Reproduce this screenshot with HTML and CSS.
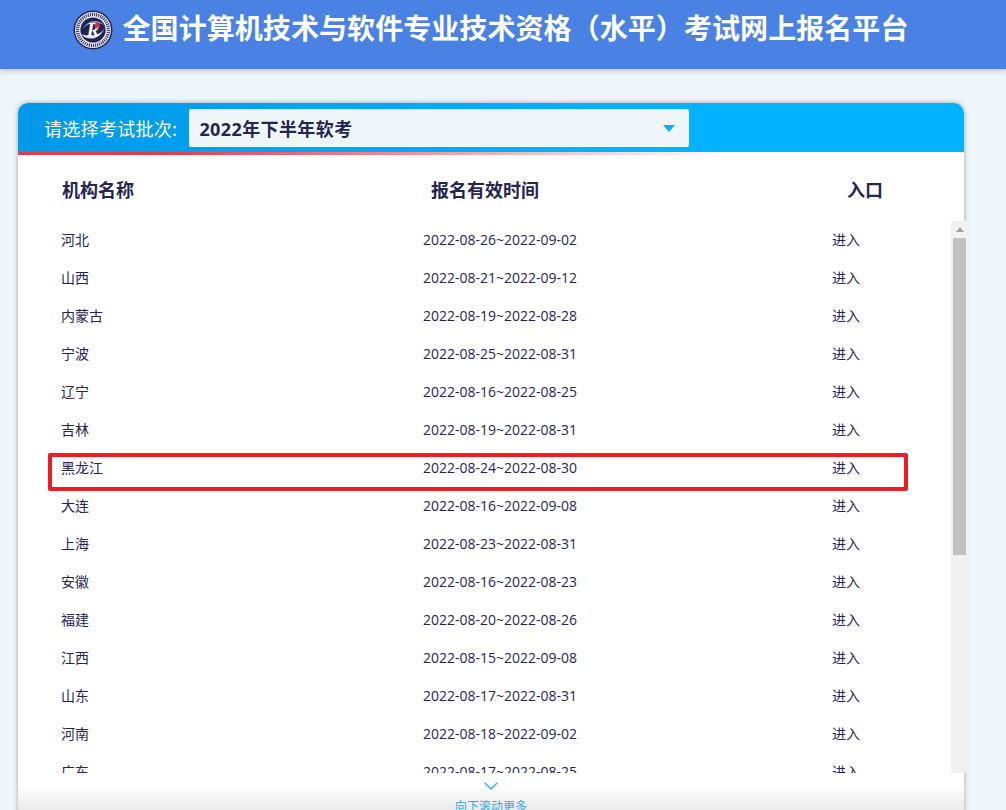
FILE: index.html
```html
<!DOCTYPE html>
<html lang="zh-CN">
<head>
  <meta charset="UTF-8" />
  <title>全国计算机技术与软件专业技术资格（水平）考试网上报名平台</title>
  <link rel="stylesheet" href="styles.css">
</head>
<body>

  <header class="topbar">
    <svg class="logo" viewBox="0 0 40 40" aria-hidden="true">
      <circle cx="20" cy="20" r="19.5" fill="#23234f"/>
      <circle cx="20" cy="20" r="18" fill="#f2f3f7"/>
      <circle cx="20" cy="20" r="15.5" fill="none" stroke="#3c3f70" stroke-width="3.4" stroke-dasharray="1.2 0.9"/>
      <circle cx="20" cy="20" r="12.6" fill="#1f2153"/>
      <path d="M8 24 C14 31 27 31 32 17 C29 25 17 28 8 24Z" fill="#e8ebf5"/>
      <path d="M31 15 C26 9 14 9 9 20 C13 13 24 11 31 15Z" fill="#8e95bd"/>
      <text x="20" y="26" class="logo-r">R</text>
      <path d="M21 15l3-3 1 2 3 1-3 2-1 3-1-3z" fill="#d8323f"/>
    </svg>
    <h1>全国计算机技术与软件专业技术资格（水平）考试网上报名平台</h1>
  </header>

  <main class="card">
    <div class="card-head">
      <span class="batch-label">请选择考试批次:</span>
      <div class="batch-select">
        <span>2022年下半年软考</span>
        <i class="caret"></i>
      </div>
    </div>
    <div class="red-line"></div>

    <div class="table-head">
      <span class="col-name">机构名称</span>
      <span class="col-time">报名有效时间</span>
      <span class="col-link">入口</span>
    </div>

    <div class="list-wrap">
      <div class="list">
        <div class="row"><span class="col-name">河北</span><span class="col-time">2022-08-26~2022-09-02</span><span class="col-link">进入</span></div>
        <div class="row"><span class="col-name">山西</span><span class="col-time">2022-08-21~2022-09-12</span><span class="col-link">进入</span></div>
        <div class="row"><span class="col-name">内蒙古</span><span class="col-time">2022-08-19~2022-08-28</span><span class="col-link">进入</span></div>
        <div class="row"><span class="col-name">宁波</span><span class="col-time">2022-08-25~2022-08-31</span><span class="col-link">进入</span></div>
        <div class="row"><span class="col-name">辽宁</span><span class="col-time">2022-08-16~2022-08-25</span><span class="col-link">进入</span></div>
        <div class="row"><span class="col-name">吉林</span><span class="col-time">2022-08-19~2022-08-31</span><span class="col-link">进入</span></div>
        <div class="row"><span class="col-name">黑龙江</span><span class="col-time">2022-08-24~2022-08-30</span><span class="col-link">进入</span></div>
        <div class="row"><span class="col-name">大连</span><span class="col-time">2022-08-16~2022-09-08</span><span class="col-link">进入</span></div>
        <div class="row"><span class="col-name">上海</span><span class="col-time">2022-08-23~2022-08-31</span><span class="col-link">进入</span></div>
        <div class="row"><span class="col-name">安徽</span><span class="col-time">2022-08-16~2022-08-23</span><span class="col-link">进入</span></div>
        <div class="row"><span class="col-name">福建</span><span class="col-time">2022-08-20~2022-08-26</span><span class="col-link">进入</span></div>
        <div class="row"><span class="col-name">江西</span><span class="col-time">2022-08-15~2022-09-08</span><span class="col-link">进入</span></div>
        <div class="row"><span class="col-name">山东</span><span class="col-time">2022-08-17~2022-08-31</span><span class="col-link">进入</span></div>
        <div class="row"><span class="col-name">河南</span><span class="col-time">2022-08-18~2022-09-02</span><span class="col-link">进入</span></div>
        <div class="row"><span class="col-name">广东</span><span class="col-time">2022-08-17~2022-08-25</span><span class="col-link">进入</span></div>
      </div>
      <div class="scrollbar">
        <i class="scroll-up"></i>
        <div class="scroll-thumb"></div>
      </div>
      <div class="highlight"></div>
    </div>

    <div class="more">
      <svg class="more-icon" viewBox="0 0 14 8" aria-hidden="true">
        <path d="M0.7 0.7 L7 7 L13.3 0.7" fill="none" stroke="#2fb4f5" stroke-width="1.5"/>
      </svg>
      <span>向下滚动更多</span>
    </div>
  </main>

</body>
</html>
```

FILE: styles.css
```css
html, body {
  height: 810px;
  overflow: hidden;
}

body {
  margin: 0;
  background: #eff6f9;
  color: #25254f;
  font-family: "Open Sans", "Noto Sans CJK SC", sans-serif;
}

.topbar {
  display: flex;
  align-items: flex-start;
  justify-content: center;
  gap: 10px;
  height: 69px;
  padding-right: 25px;
  box-sizing: border-box;
  background: #4a82e4;
  box-shadow: 0 2px 6px rgba(0, 0, 0, 0.2);
}

.logo {
  width: 40px;
  height: 40px;
  margin-top: 10px;
}

.logo-r {
  font-family: "Liberation Serif", serif;
  font-size: 19px;
  font-style: italic;
  font-weight: bold;
  fill: #fff;
  text-anchor: middle;
}

.topbar h1 {
  margin: 5px 0 0;
  font-family: "Noto Sans CJK SC", sans-serif;
  font-size: 28px;
  line-height: 44px;
  font-weight: bold;
  letter-spacing: 0.07px;
  color: #fff;
  white-space: nowrap;
}

.card {
  width: 946px;
  margin: 34px 0 0 18px;
  background: #fff;
  border-radius: 10px 10px 0 0;
  box-shadow: 0 0 5px rgba(0, 0, 0, 0.35);
}

.card-head {
  display: flex;
  align-items: center;
  gap: 12px;
  height: 49px;
  padding-left: 26px;
  border-radius: 10px 10px 0 0;
  background: linear-gradient(to right, #0098e8, #00b2ff 60%);
}

.batch-label {
  color: #fff;
  font-size: 18px;
  letter-spacing: 0.3px;
  font-family: "Noto Sans CJK SC", sans-serif;
  white-space: nowrap;
}

.batch-select {
  display: flex;
  align-items: center;
  justify-content: space-between;
  width: 500px;
  height: 38px;
  padding: 0 14px 0 10px;
  box-sizing: border-box;
  background: #eff6f9;
  border-radius: 2px;
  font-size: 18px;
  font-weight: bold;
  letter-spacing: 0.4px;
}

.caret {
  width: 0;
  height: 0;
  margin-top: 1px;
  border-left: 6px solid transparent;
  border-right: 6px solid transparent;
  border-top: 7px solid #00b2ff;
}

.red-line {
  height: 3px;
  background: linear-gradient(to right, #e63946, #e63946 15%, rgba(230, 57, 70, 0) 75%);
}

.table-head {
  display: flex;
  align-items: center;
  height: 66px;
  padding-top: 2px;
  box-sizing: border-box;
  font-size: 18px;
  font-weight: bold;
  font-family: "Noto Sans CJK SC", sans-serif;
}

.table-head .col-name {
  width: 369px;
  padding-left: 44px;
  box-sizing: border-box;
}

.table-head .col-time {
  width: 417px;
  margin-left: 44px;
}

.table-head .col-link {
  margin-left: -1px;
}

.list-wrap {
  position: relative;
  display: flex;
  justify-content: space-between;
  height: 552px;
  margin-right: -4px;
}

.list {
  flex: 1;
  overflow: hidden;
}

.row {
  display: flex;
  align-items: center;
  height: 38px;
  padding-bottom: 2px;
  box-sizing: border-box;
  font-size: 14px;
  white-space: nowrap;
}

.row .col-name {
  width: 362px;
  margin-left: 43px;
  flex: none;
}

.row .col-time {
  width: 409px;
  flex: none;
  margin-left: 0;
}

.scrollbar {
  flex: none;
  width: 17px;
  background: #f1f1f1;
}

.scroll-up {
  display: block;
  width: 0;
  height: 0;
  margin: 6px auto 0;
  border-left: 4px solid transparent;
  border-right: 4px solid transparent;
  border-bottom: 5px solid #a3a3a3;
}

.scroll-thumb {
  width: 13px;
  height: 317px;
  margin: 6px 0 0 2px;
  background: #c1c1c1;
}

.highlight {
  position: absolute;
  left: 30px;
  top: 232px;
  width: 852px;
  height: 30px;
  border: 4px solid #ee1c25;
  border-radius: 2px;
}

.more {
  position: relative;
  height: 60px;
  text-align: center;
  font-size: 12px;
  color: #3ba6e8;
  font-family: "Noto Sans CJK SC", sans-serif;
  background: linear-gradient(to bottom, #fff, #fff 20%, #ebebeb 62%);
}

.more-icon {
  display: block;
  width: 14px;
  height: 8px;
  margin: 0 auto;
  padding-top: 9px;
}

.more span {
  display: block;
  margin-top: 7px;
  line-height: 18px;
}
```
